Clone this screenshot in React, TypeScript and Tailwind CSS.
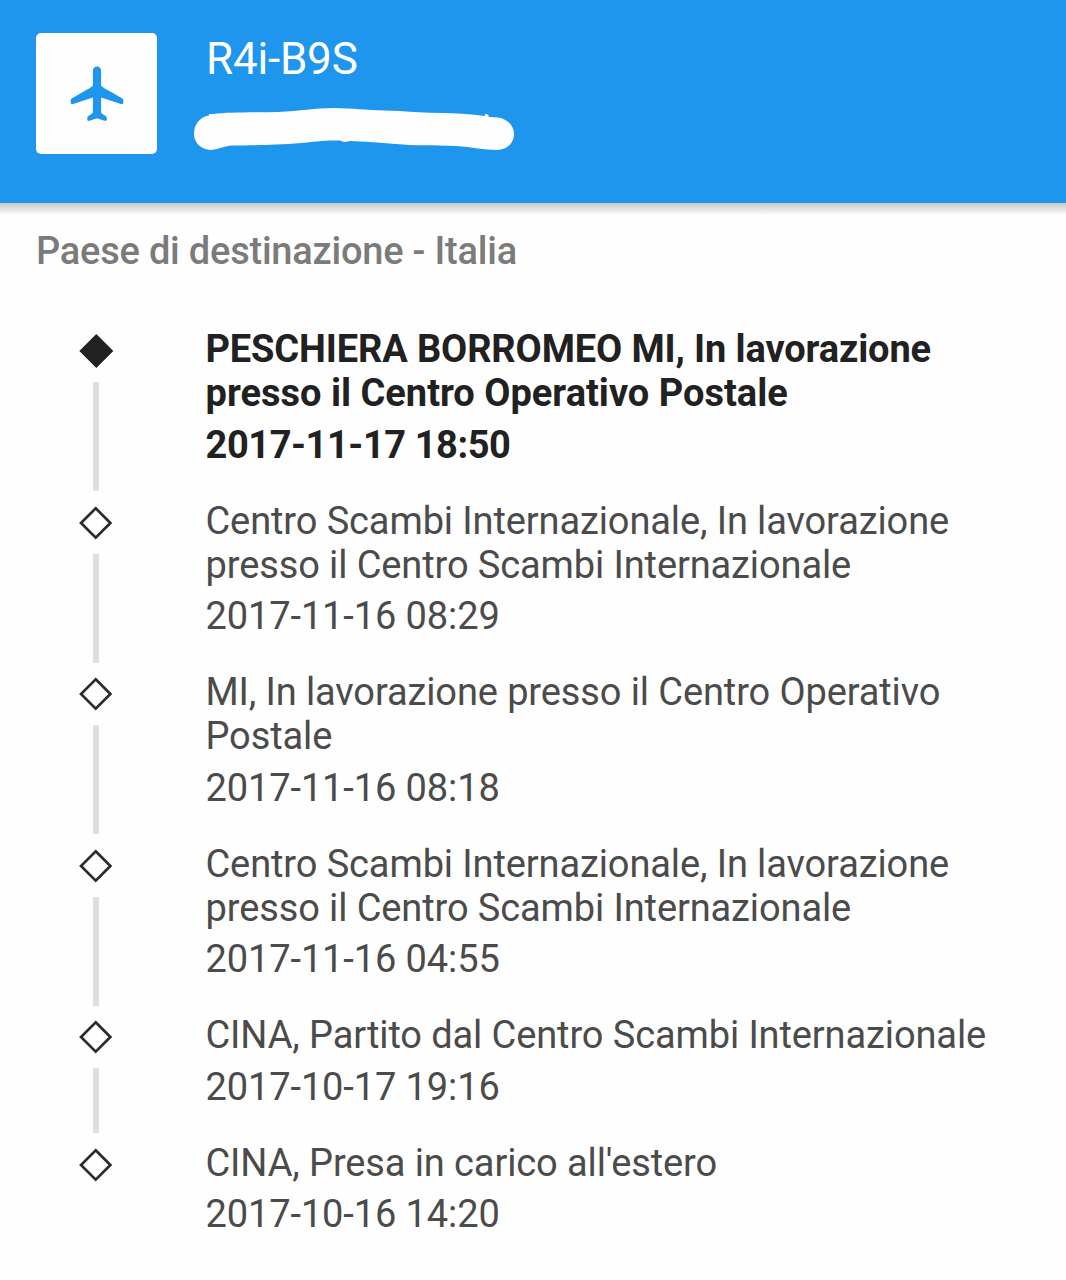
import React from "react";

type TrackingEvent = { lines: string[]; date: string; current?: boolean };

const events: TrackingEvent[] = [
  {
    lines: ["PESCHIERA BORROMEO MI, In lavorazione", "presso il Centro Operativo Postale"],
    date: "2017-11-17 18:50",
    current: true,
  },
  {
    lines: ["Centro Scambi Internazionale, In lavorazione", "presso il Centro Scambi Internazionale"],
    date: "2017-11-16 08:29",
  },
  { lines: ["MI, In lavorazione presso il Centro Operativo", "Postale"], date: "2017-11-16 08:18" },
  {
    lines: ["Centro Scambi Internazionale, In lavorazione", "presso il Centro Scambi Internazionale"],
    date: "2017-11-16 04:55",
  },
  { lines: ["CINA, Partito dal Centro Scambi Internazionale"], date: "2017-10-17 19:16" },
  { lines: ["CINA, Presa in carico all'estero"], date: "2017-10-16 14:20" },
];

function Plane() {
  return (
    <svg width="54" height="56" viewBox="0 0 54 56" fill="#1e96ed">
      <path d="M27 0.500c-2.400 0-4.100 1.700-4.100 4V19.500C22.500 20.500 19 22.500 15 24.800L2.500 32C1.300 32.700.7 33.400.7 34.500V36.500C.7 38 1.700 38.500 3 38L22.900 31.500V46.500C20.500 49.500 17.300 49.500 17.300 52V53.500C17.300 54.800 18.300 55.200 19.500 54.800C22 53.800 24.500 52.800 27 52.200C29.500 52.800 32 53.800 34.500 54.800C35.700 55.200 36.800 54.800 36.800 53.500V52C36.800 49.500 33.500 49.500 31.100 46.500V31.500L51 38C52.300 38.500 53.300 38 53.300 36.500V34.500C53.300 33.400 52.700 32.700 51.500 32L39 24.800C35 22.500 31.500 20.500 31.100 19.500V4.500C31.100 2.200 29.400.5 27 .5z" />
    </svg>
  );
}

function Marker({ filled }: { filled?: boolean }) {
  return (
    <svg className="block shrink-0" width="36" height="36" viewBox="0 0 36 36">
      {filled ? (
        <path d="M18.300 1L35.300 18L18.300 35L1.300 18z" fill="#212121" />
      ) : (
        <path d="M17.700 3.300L32.400 18L17.700 32.700L3 18z" fill="none" stroke="#2b2b2b" strokeWidth="2.700" />
      )}
    </svg>
  );
}

function EventRow({ event, last }: { event: TrackingEvent; last: boolean }) {
  return (
    <li className="flex">
      <div className="ml-[78px] flex w-9 shrink-0 flex-col items-center pt-[6px]">
        <Marker filled={event.current} />
        {!last && <div className="mt-[13px] mr-[1px] mb-[7.5px] w-[6px] flex-1 bg-[#dedede]" />}
      </div>
      <div
        className={
          event.current
            ? "ml-[91.5px] pb-[31.5px] text-[38px] leading-[44px] font-bold whitespace-nowrap text-[#212121]"
            : "ml-[91.5px] pb-[32px] text-[38px] leading-[44px] tracking-[-0.11px] whitespace-nowrap text-[#4b4b4b]"
        }
      >
        {event.lines.map((line, i) => (
          <p key={line} className={event.current && i === 0 ? "tracking-[-0.13px]" : ""}>
            {line}
          </p>
        ))}
        <p className={event.current ? "mt-[8px] tracking-[-0.42px]" : "mt-[7.5px]"}>{event.date}</p>
      </div>
    </li>
  );
}

export default function App() {
  return (
    <div className="h-[1280px] w-[1066px] overflow-hidden bg-[#fefefe] font-['Roboto',sans-serif]">
      <header className="flex h-[203px] bg-[#1e96ed] pt-[33px] pl-[36px]">
        <div className="flex h-[121px] w-[121px] shrink-0 items-center justify-center rounded-[5px] bg-[#fefefe]">
          <Plane />
        </div>
        <div className="ml-[37px] flex flex-col">
          <h1 className="ml-[12px] h-[52px] text-[44px] leading-[52px] tracking-[-0.2px] whitespace-nowrap text-[#fefefe]">
            R4i-B9S
          </h1>
          <svg className="mt-[22.5px] block" width="320" height="44" viewBox="0 0 320 44" fill="#fefefe">
            <path d="M16 42C6 41 0 34 0 26C0 16 6 9 15 7.500L15 6L18 6L19 6C34 4 60 4.500 84 4C107 3 120 0 140 0C160 .2 170 2 190 2.500C210 3 230 5 250 5C270 5.500 280 6.500 291 8L291 6L294 6.500L295 9L304 9.500C314 11 320 18 320 26C320 35 313 42 303 42C290 42 278 39 262 38C240 37 220 38 202 36C190 35 180 34 157 33L150 34L146 32.500C130 32 120 34 107 35C80 37.500 55 37 39 37.500C28 38 24 42 16 42z" />
          </svg>
        </div>
      </header>
      <div className="h-[12px] bg-linear-to-b from-[#c7cbc8] to-[#fefefe]" />
      <h2 className="mt-[14px] ml-[36px] h-[44px] text-[38px] leading-[44px] font-medium tracking-[-0.22px] whitespace-nowrap text-[#7b7b7b]">
        Paese di destinazione - Italia
      </h2>
      <ul className="mt-[54px]">
        {events.map((event, i) => (
          <EventRow key={event.date} event={event} last={i === events.length - 1} />
        ))}
      </ul>
    </div>
  );
}
